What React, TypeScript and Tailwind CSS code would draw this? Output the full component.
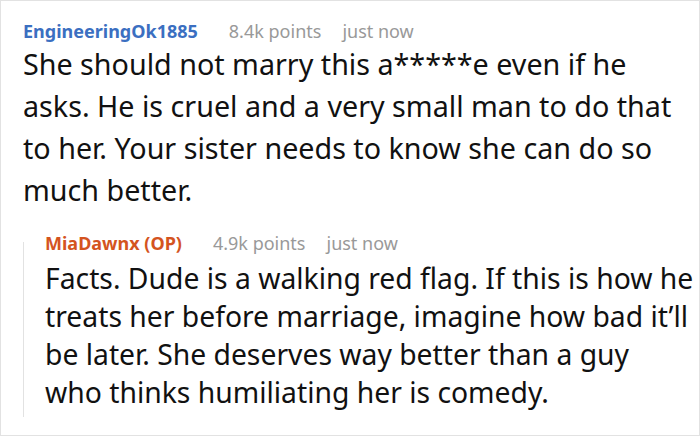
export default function App() {
  return (
    <div className="w-[700px] h-[436px] bg-white border border-[#e2e2e2] overflow-hidden" style={{ fontFamily: '"Noto Sans", sans-serif' }}>
      <div className="pl-[22px] pr-[18px] pt-[18px]">
        <div className="flex items-baseline text-[18px] leading-[24px]">
          <span className="font-bold text-[#3b6fc1]">EngineeringOk1885</span>
          <span className="text-[#999999] ml-[31px]">8.4k points</span>
          <span className="text-[#999999] ml-[21px]">just now</span>
        </div>
        <p className="text-[28.7px] leading-[42px] text-[#111]">
          She should not marry this a*****e even if he asks. He is cruel and a very small man to do that to her. Your sister needs to know she can do so much better.
        </p>
        <div className="mt-[20px] -mr-[17px] flex">
          <div className="w-px h-[175px] shrink-0 bg-[#e2e2e2] mt-[11px]" />
          <div className="flex-1 pl-[21px]">
            <div className="flex items-baseline text-[18px] leading-[24px]">
              <span className="font-bold text-[#d4541f]">MiaDawnx (OP)</span>
              <span className="text-[#999999] ml-[31px]">4.9k points</span>
              <span className="text-[#999999] ml-[21px]">just now</span>
            </div>
            <p className="text-[28.3px] leading-[38px] text-[#111] mt-[4px] whitespace-nowrap">
              Facts. Dude is a walking red flag. If this is how he<br />
              treats her before marriage, imagine how bad it’ll<br />
              be later. She deserves way better than a guy<br />
              who thinks humiliating her is comedy.
            </p>
          </div>
        </div>
      </div>
    </div>
  )
}
